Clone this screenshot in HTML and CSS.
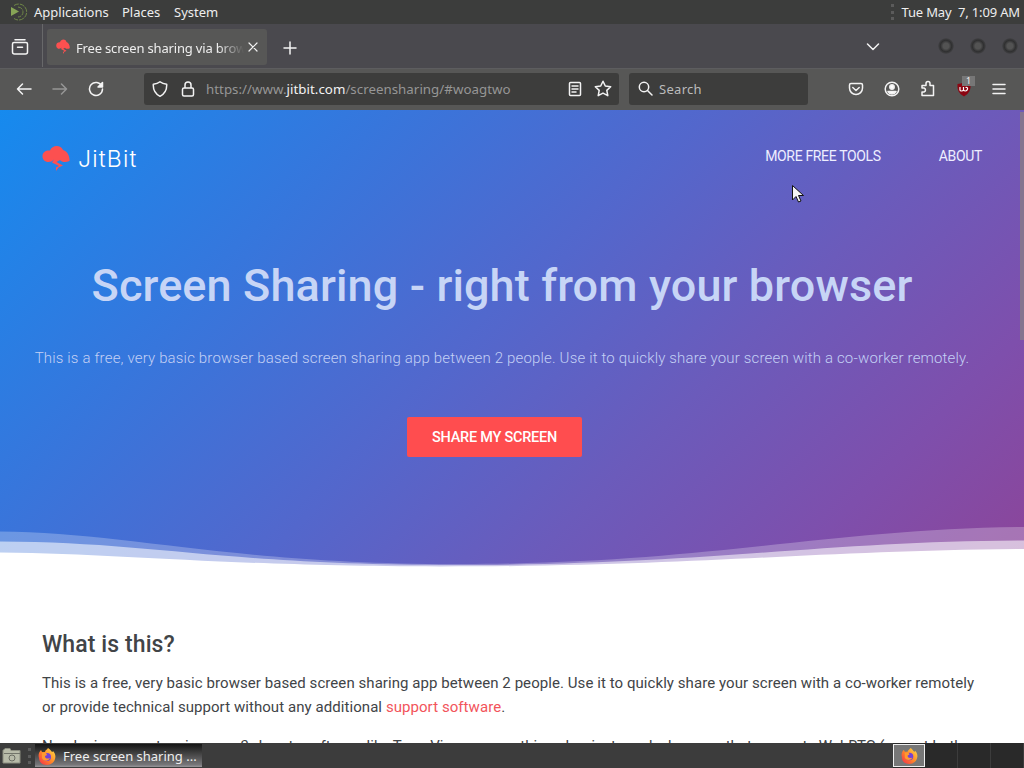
FILE: index.html
```html
<!DOCTYPE html>
<html lang="en">
<head>
    <meta charset="UTF-8">
    <meta name="viewport" content="width=device-width, initial-scale=1.0">
    <title>Free screen sharing via browser</title>
    <link rel="stylesheet" href="styles.css">
</head>
<body>

<svg class="defs" width="0" height="0">
    <defs>
        <linearGradient id="flame" x1="1" y1="0" x2="0" y2="1">
            <stop offset="0" stop-color="#ffe14a"/>
            <stop offset=".5" stop-color="#ff8a28"/>
            <stop offset="1" stop-color="#f5284e"/>
        </linearGradient>
        <symbol id="cloud" viewBox="0 0 28 26">
            <path fill="#fc5050" d="M.5 12C0 7 4 5 8 5.500C10-.5 19-.5 21 5C25 6 28 11 27.500 16C24 17.500 20 17.500 18 15L14.500 17L21 20.500L16.500 22.500L14 26L14 22.500L17 21L10 17.500L12 14.500C8 19 1 17 .5 12Z"/>
        </symbol>
        <symbol id="firefox" viewBox="0 0 18 18">
            <path fill="url(#flame)" d="M10 1C12 2 13 4 14 5C15 5 15 4 15 4C17 6 18 9 17 12C16 16 12 18 9 18C4 18 1 15 1 11C0 8 1 5 3 3L4 5L7 5C7 3 9 3 10 1Z"/>
            <circle cx="9" cy="10" r="4" fill="#7542d5"/>
            <path fill="#ff9a30" d="M4 6L8 6L9 8L7 9C7 12 10 12 12 11C10 15 5 14 4 11Z"/>
        </symbol>
    </defs>
</svg>

<div class="screen">
    <div class="panel">
        <svg class="mate" width="20" height="18" viewBox="0 0 20 18" fill="none">
            <path d="M2 4L10 8.5L2 13Z" fill="#87a556"/>
            <path d="M5 2.5A8 8 0 1 1 5 15.500M9 4A5 5 0 1 1 9 14" stroke="#6f8747" stroke-dasharray="5 1"/>
        </svg>
        <span class="menu m-apps">Applications</span>
        <span class="menu m-places">Places</span>
        <span class="menu m-system">System</span>
        <span class="grip"></span>
        <span class="clock">Tue May&nbsp; 7, 1:09 AM</span>
    </div>

    <div class="tabbar">
        <div class="tab-view">
            <svg class="icon" width="18" height="18" viewBox="0 0 18 18">
                <path d="M4 1.700H14M3 4.500H15Q16.500 4.500 16.500 6V14Q16.500 16 14.500 16H3.500Q1.500 16 1.500 14V6Q1.500 4.500 3 4.500ZM6.500 9.200H11.500"/>
            </svg>
        </div>
        <div class="tab">
            <svg class="favicon" width="14" height="15" viewBox="0 0 28 26" preserveAspectRatio="none"><use href="#cloud" width="28" height="26"/></svg>
            <span class="tab-title">Free screen sharing via brow</span>
            <svg class="icon tab-close" width="10" height="10" viewBox="0 0 10 10"><path d="M1 1L9 9M9 1L1 9"/></svg>
        </div>
        <svg class="icon new-tab" width="14" height="14" viewBox="0 0 14 14"><path d="M7 1V13M1 7H13"/></svg>
        <svg class="icon all-tabs" width="14" height="8" viewBox="0 0 14 8"><path d="M1.500 1L7 6.500L12.500 1"/></svg>
        <div class="window-buttons"><i></i><i></i><i></i></div>
    </div>

    <div class="toolbar">
        <div class="nav">
            <svg class="icon" width="16" height="14" viewBox="0 0 16 14"><path d="M15 7H1.500M6.500 2L1.500 7L6.500 12"/></svg>
            <svg class="icon dim" width="16" height="14" viewBox="0 0 16 14"><path d="M1 7H14.500M9.500 2L14.500 7L9.500 12"/></svg>
            <svg class="icon" width="16" height="16" viewBox="0 0 16 16"><path d="M13.800 5A6.500 6.500 0 1 0 14.500 8"/><path fill="#fff" d="M14.500 1.500V6H10Z"/></svg>
        </div>
        <div class="urlbar">
            <svg class="icon" width="16" height="16" viewBox="0 0 16 16"><path d="M8 .8Q10.500 2.900 14.700 3.300C15 9 12.500 13 8 15.300C3.500 13 1 9 1.300 3.300Q5.500 2.900 8 .8Z"/></svg>
            <svg class="icon lock" width="14" height="16" viewBox="0 0 14 16"><path d="M4 7V4Q4 1 7 1T10 4V7M3 7H11Q12.500 7 12.500 8.500V13.500Q12.500 15 11 15H3Q1.500 15 1.500 13.500V8.500Q1.500 7 3 7Z"/></svg>
            <span class="url">https://www.<b>jitbit.com</b>/screensharing/#woagtwo</span>
            <svg class="icon reader" width="14" height="16" viewBox="0 0 14 16"><path d="M2.500 1.500H11.500Q12.500 1.500 12.500 2.500V13.500Q12.500 14.500 11.500 14.500H2.500Q1.500 14.500 1.500 13.500V2.500Q1.500 1.500 2.500 1.500ZM4 5H10M4 8H10M4 11H8"/></svg>
            <svg class="icon" width="18" height="17" viewBox="0 0 18 17"><path d="M9 1.200L11.300 6L16.700 6.700L12.800 10.400L13.800 15.700L9 13.100L4.200 15.700L5.200 10.400L1.300 6.700L6.700 6Z"/></svg>
        </div>
        <div class="search">
            <svg class="icon" width="15" height="15" viewBox="0 0 15 15"><circle cx="6" cy="6" r="4.700"/><path d="M9.500 9.500L14 14"/></svg>
            <span>Search</span>
        </div>
        <div class="tools">
            <svg class="icon" width="16" height="16" viewBox="0 0 16 16"><path d="M3 2.500H13Q14.500 2.500 14.500 4V7A6.500 6.500 0 0 1 1.500 7V4Q1.500 2.500 3 2.500ZM4.800 6.500L8 9.500L11.200 6.500"/></svg>
            <svg class="icon" width="16" height="16" viewBox="0 0 16 16"><circle cx="8" cy="8" r="6.800"/><circle cx="8" cy="6" r="2.200" fill="#fff"/><path fill="#fff" d="M4 10.500H12Q10.500 13 8 13T4 10.500Z"/></svg>
            <svg class="icon" width="16" height="17" viewBox="0 0 16 17"><path d="M2 8V5.500H6V3.500Q6 1.500 8 1.500T10 3.500V5.500H13.500V15.500H2V12H4Q5.500 11.500 5.500 10T4 8Z"/></svg>
            <div class="ublock">
                <svg width="14" height="16" viewBox="0 0 14 16"><path fill="#8c0612" d="M7 1Q10 3 13.500 3C14 9 12 12.500 7 15.500C2 12.500 0 9 .5 3Q4 3 7 1Z"/><path fill="none" stroke="#fff" stroke-width="1.200" d="M3 6V9Q3 10 4.500 10T6.500 9V6M6.500 9Q7 10 8.500 10T10.500 8T8.500 6.500"/></svg>
                <span class="badge">1</span>
            </div>
            <svg class="icon" width="14" height="14" viewBox="0 0 14 14"><path d="M1 2.500H13M1 7H13M1 11.500H13"/></svg>
        </div>
    </div>

    <div class="page">
        <div class="hero">
            <div class="header">
                <svg class="logo-icon" width="28" height="26"><use href="#cloud"/></svg>
                <span class="logo">JitBit</span>
                <a class="link tools-link">MORE FREE TOOLS</a>
                <a class="link about-link">ABOUT</a>
            </div>
            <h1>Screen Sharing - right from your browser</h1>
            <p class="lead">This is a free, very basic browser based screen sharing app between 2 people. Use it to quickly share your screen with a co-worker remotely.</p>
            <button class="share" type="button">SHARE MY SCREEN</button>
            <svg class="waves" width="1024" height="45" viewBox="0 0 1024 45" fill="#fff">
                <path fill-opacity=".25" d="M0 6.500C120 7 230 38 440 39C700 41 820 4 1024 2V45H0Z"/>
                <path fill-opacity=".55" d="M0 16.500C150 17 220 39 440 40C700 41 820 16 1024 15.500V45H0Z"/>
                <path d="M0 27.500C130 29 220 41 440 41.500C700 41.500 800 26 1024 24V45H0Z"/>
            </svg>
        </div>
        <div class="content">
            <h2>What is this?</h2>
            <p>This is a free, very basic browser based screen sharing app between 2 people. Use it to quickly share your screen with a co-worker remotely<br>
            or provide technical support without any additional <a>support software</a>.</p>
            <p class="cut">No plugins, no extensions, no 3rd-party software like TeamViewer or anything else, just need a browser that supports WebRTC (except both</p>
        </div>
        <div class="scrollbar"></div>
    </div>

    <div class="taskbar">
        <svg width="20" height="18" viewBox="0 0 20 18"><path fill="#b8bba9" stroke="#8b8d80" d="M1 3.500L3 1.500H8L9 3.500H18V16H1Z"/><path d="M2 6.500H18" stroke="#72746a"/><circle cx="10" cy="11" r="3" fill="none" stroke="#6b6d64"/></svg>
        <span class="grip"></span>
        <div class="task"><svg width="18" height="18"><use href="#firefox"/></svg><span>Free screen sharing ...</span></div>
        <div class="workspaces">
            <div class="ws active"><svg width="17" height="17"><use href="#firefox"/></svg></div>
            <div class="ws"></div><div class="ws"></div><div class="ws"></div>
        </div>
    </div>
</div>

<svg class="cursor" width="14" height="20" viewBox="0 0 14 20"><path fill="#f4f4f4" stroke="#111" d="M1.500 1.500V16L5 12.500L7.500 18L10 17L7.500 11.500H12.500Z"/></svg>

</body>
</html>
```

FILE: styles.css
```css
* {
    box-sizing: border-box;
}
body {
    margin: 0;
    overflow: hidden;
    font-family: "Noto Sans", sans-serif;
    font-size: 13px;
    color: #eee;
}
svg {
    display: block;
    flex: none;
}
.defs {
    position: absolute;
}
.screen {
    width: 1024px;
    height: 768px;
    display: flex;
    flex-direction: column;
}
.icon {
    fill: none;
    stroke: #f3f3f3;
    stroke-width: 1.5;
    stroke-linecap: round;
    stroke-linejoin: round;
}
.dim {
    opacity: .4;
}

/* desktop panel */
.panel {
    height: 24px;
    background: #3c3d3c;
    display: flex;
    align-items: center;
    padding: 0 4px 0 9px;
    white-space: nowrap;
}
.mate {
    margin-right: 5px;
}
.m-apps {
    width: 88px;
}
.m-places {
    width: 52px;
}
.grip {
    width: 3px;
    height: 16px;
    border-left: 3px dotted #5b5b5b;
}
.panel .grip {
    margin-left: auto;
    margin-right: 7px;
}
.clock {
    letter-spacing: -.15px;
}

/* browser tabs */
.tabbar {
    height: 45px;
    background: #4a494e;
    border-bottom: 1px solid #5d5d5f;
    display: flex;
    align-items: center;
    padding-bottom: 1px;
}
.tab-view {
    width: 43px;
    height: 43px;
    border-right: 1px solid #68686a;
    display: flex;
    align-items: center;
    padding: 3px 0 0 11px;
}
.tab {
    width: 220px;
    height: 36px;
    margin: 3px 16px 0 4px;
    padding: 0 10px 0 9px;
    border-radius: 3px;
    background: #575756;
    display: flex;
    align-items: center;
}
.favicon {
    margin-top: -2px;
}
.tab-title {
    width: 170px;
    margin: 2px 0 0 6px;
    letter-spacing: -.17px;
    white-space: nowrap;
    -webkit-mask-image: linear-gradient(90deg, #000 142px, transparent 168px);
    mask-image: linear-gradient(90deg, #000 142px, transparent 168px);
}
.tab-close {
    margin-left: 2px;
    stroke-width: 1.2;
}
.new-tab {
    margin-top: 4px;
}
.all-tabs {
    margin: 2px 0 0 auto;
}
.window-buttons {
    display: flex;
    gap: 16px;
    margin: 0 6px 0 58px;
}
.window-buttons i {
    width: 16px;
    height: 16px;
    border-radius: 50%;
    background: radial-gradient(circle, #535353 25%, #303031 50%, #3b3b3d 62%, #4a494e 74%);
}

/* browser toolbar */
.toolbar {
    height: 41px;
    background: #575756;
    display: flex;
    align-items: center;
    padding-bottom: 2px;
    font-size: 13px;
}
.nav {
    width: 144px;
    display: flex;
    align-items: center;
    gap: 20px;
    padding-left: 16px;
}
.urlbar {
    width: 475px;
    height: 32px;
    margin-right: 10px;
    padding: 0 7px 0 8px;
    background: #3d3d3c;
    border-radius: 3px;
    display: flex;
    align-items: center;
}
.lock {
    margin: 0 11px 0 13px;
}
.url {
    color: #969696;
    font-size: 13.3px;
    letter-spacing: .03px;
}
.url b {
    color: #f3f3f3;
    font-weight: normal;
}
.reader {
    margin: 0 12px 0 auto;
}
.search {
    width: 179px;
    height: 32px;
    padding-left: 9px;
    background: #3d3d3c;
    border-radius: 3px;
    display: flex;
    align-items: center;
    gap: 6px;
    color: #bbb;
    letter-spacing: .3px;
}
.tools {
    display: flex;
    align-items: center;
    gap: 20px;
    padding-left: 40px;
}
.ublock {
    position: relative;
    margin: 0 1px;
}
.badge {
    position: absolute;
    top: -5px;
    left: 5px;
    width: 13px;
    height: 10px;
    background: #777;
    font-size: 9px;
    line-height: 10px;
    text-align: center;
}

/* web page */
.page {
    position: relative;
    height: 633px;
    overflow: hidden;
    background: #fff;
    font-family: Roboto, sans-serif;
    white-space: nowrap;
}
.hero {
    height: 460px;
    background: linear-gradient(135deg, #168aee 0%, #3577dd 25%, #5367cc 48%, #6b5bbb 66%, #7e4fac 84%, #8c4599 100%);
    display: flex;
    flex-direction: column;
}
.header {
    height: 94px;
    padding: 0 42px;
    display: flex;
    align-items: center;
}
.logo-icon {
    margin-top: 2px;
}
.logo {
    margin: 3px auto 0 8px;
    font-family: Inter, sans-serif;
    font-size: 23px;
    font-weight: 300;
    color: #fff;
    letter-spacing: 1.2px;
}
.link {
    font-size: 14px;
    color: #eef;
    margin-top: -2px;
    letter-spacing: -.34px;
}
.tools-link {
    margin-right: 58px;
}
.hero h1 {
    margin: 52px 20px 0 0;
    height: 60px;
    line-height: 60px;
    text-align: center;
    font-size: 45px;
    font-weight: 500;
    letter-spacing: .12px;
    color: #c7d5f6;
}
.lead {
    margin: 30px 20px 0 0;
    height: 24px;
    line-height: 24px;
    font-size: 15px;
    font-weight: 300;
    letter-spacing: .17px;
    color: #c3d0f5;
    text-align: center;
}
.share {
    width: 175px;
    height: 40px;
    margin: 47px 0 0 407px;
    padding: 1px 0 0;
    border: none;
    border-radius: 2px;
    background: #ff4d4f;
    color: #fff;
    font-family: Roboto, sans-serif;
    font-size: 14.5px;
    font-weight: 500;
    letter-spacing: -.24px;
}
.waves {
    margin-top: auto;
}
.content {
    padding: 59px 42px 0;
    color: #414447;
}
.content h2 {
    margin: 0;
    height: 32px;
    line-height: 32px;
    font-size: 23px;
    font-weight: 500;
    letter-spacing: .1px;
}
.content p {
    margin: 10px 0 0;
    line-height: 24px;
    font-size: 15px;
    letter-spacing: .066px;
}
.content .cut {
    margin-top: 15px;
    letter-spacing: 0;
}
.content a {
    color: #f2545b;
}
.scrollbar {
    position: absolute;
    top: 2px;
    right: 0;
    width: 4px;
    height: 228px;
    background: #84748f;
}

/* bottom panel */
.taskbar {
    height: 25px;
    background: #3c3c3c;
    display: flex;
    align-items: center;
    padding-left: 2px;
}
.taskbar .grip {
    margin: 0 4px 0 6px;
}
.task {
    width: 167px;
    height: 23px;
    padding-left: 3px;
    background: linear-gradient(#151515, #3b3b3b 35%, #777679 90%, #98979b);
    display: flex;
    align-items: center;
    gap: 7px;
}
.workspaces {
    margin-left: auto;
    height: 25px;
    display: flex;
    align-items: center;
    background: #292929;
}
.ws {
    width: 33px;
    height: 25px;
    border-right: 1px solid #3c3c3c;
}
.ws.active {
    width: 32px;
    height: 23px;
    border: 1px solid #eee;
    background: #777;
    display: flex;
    align-items: center;
    justify-content: center;
}

.cursor {
    position: absolute;
    left: 791px;
    top: 184px;
}
```
